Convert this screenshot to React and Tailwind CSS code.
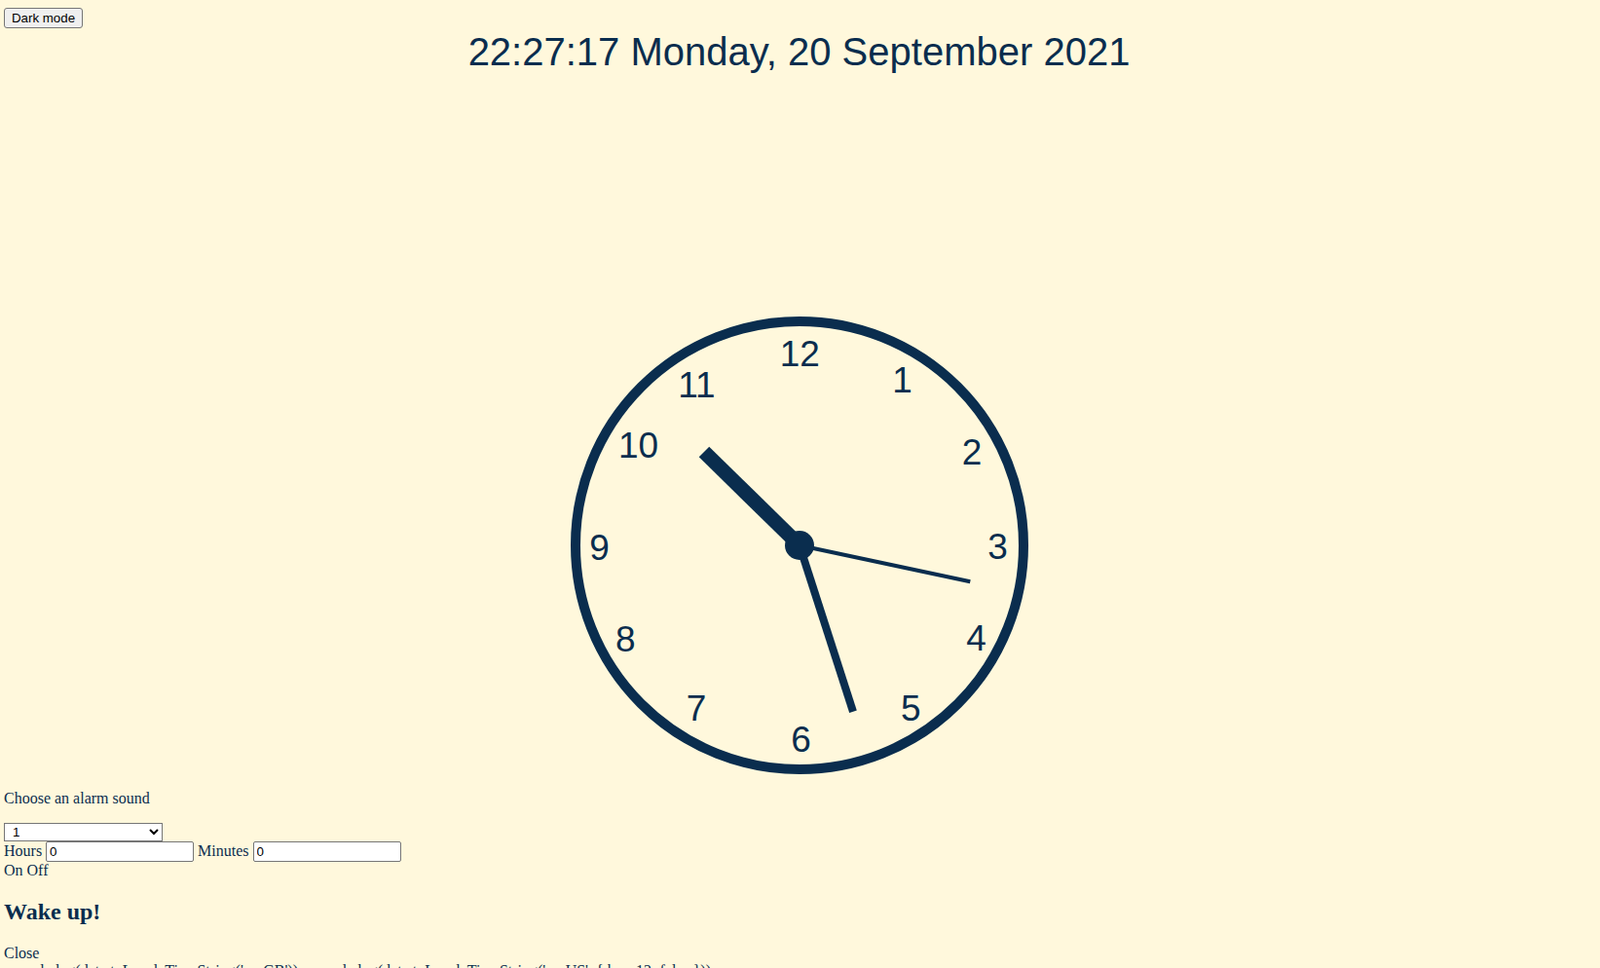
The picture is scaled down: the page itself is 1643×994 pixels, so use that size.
import React from "react";

const NAVY = "#0a2d4e";

function Clock() {
  const cx = 235;
  const cy = 235;
  const nums = [
    ["12", 0.3, -197.3],
    ["1", 105.5, -170],
    ["2", 177, -96.7],
    ["3", 203.6, 0.7],
    ["4", 181.6, 94.3],
    ["5", 114.3, 166.7],
    ["6", 1.6, 199],
    ["7", -106, 167],
    ["8", -178.7, 95.3],
    ["9", -205.4, 1.7],
    ["10", -165.5, -103],
    ["11", -105.5, -165.5],
  ];
  return (
    <svg width="470" height="470" viewBox="0 0 470 470" className="block mx-auto">
      <circle cx={cx} cy={cy} r="230" fill="none" stroke={NAVY} strokeWidth="10" />
      {nums.map(([t, dx, dy]) => (
        <text
          key={t}
          x={cx + dx}
          y={cy + dy + 13.3}
          textAnchor="middle"
          fill={NAVY}
          fontSize="37"
          fontFamily="'Liberation Sans', Arial, sans-serif"
        >
          {t}
        </text>
      ))}
      <line x1={cx} y1={cy} x2={cx - 98} y2={cy - 96} stroke={NAVY} strokeWidth="15" strokeLinecap="butt" />
      <line x1={cx} y1={cy} x2={cx + 55} y2={cy + 170.7} stroke={NAVY} strokeWidth="8" strokeLinecap="butt" />
      <line x1={cx} y1={cy} x2={cx + 175.3} y2={cy + 37.3} stroke={NAVY} strokeWidth="4" strokeLinecap="butt" />
      <circle cx={cx} cy={cy} r="15" fill={NAVY} />
    </svg>
  );
}

export default function App() {
  return (
    <div
      className="min-h-screen bg-[#fff8dc] text-[#0a2d4e] pl-1 pr-[6px] pt-2 leading-[normal] text-[16px]"
      style={{ fontFamily: "'Liberation Serif', 'Times New Roman', serif" }}
    >
      <button
        className="block w-[81px] h-[21px] border border-[#767676] bg-[#efefef] rounded-[3px] text-[13.33px] text-black font-['Liberation_Sans',Arial,sans-serif] leading-none px-[6px]"
      >
        Dark mode
      </button>
      <h1 className="mt-[1px] text-center text-[40px] leading-[46px] font-normal font-['Liberation_Sans',Arial,sans-serif]">
        22:27:17 Monday, 20 September 2021
      </h1>
      <div className="mt-[249px]">
        <Clock />
      </div>
      <p className="my-4">Choose an alarm sound</p>
      <select className="block w-[163px] h-[19px] border border-[#767676] bg-white text-black text-[13.33px] font-['Liberation_Sans',Arial,sans-serif] rounded-none pl-[4px]">
        <option>1</option>
        <option>2</option>
        <option>3</option>
      </select>
      <div>
        Hours{" "}
        <input
          type="text"
          defaultValue="0"
          className="w-[152px] h-[21px] border border-[#767676] bg-white text-black text-[13.33px] font-['Liberation_Sans',Arial,sans-serif] px-[3px] py-[1px] rounded-[2px]"
        />{" "}
        Minutes{" "}
        <input
          type="text"
          defaultValue="0"
          className="w-[152px] h-[21px] border border-[#767676] bg-white text-black text-[13.33px] font-['Liberation_Sans',Arial,sans-serif] px-[3px] py-[1px] rounded-[2px]"
        />
      </div>
      <div>On Off</div>
      <h2 className="my-[19.92px] text-[24px] font-bold">Wake up!</h2>
      <div className="mt-[1px]">Close</div>
      <div>
        console.log(date.toLocaleTimeString('en-GB')); console.log(date.toLocaleTimeString('en-US', {"{ "}hour12: false{" }"}))
      </div>
    </div>
  );
}
